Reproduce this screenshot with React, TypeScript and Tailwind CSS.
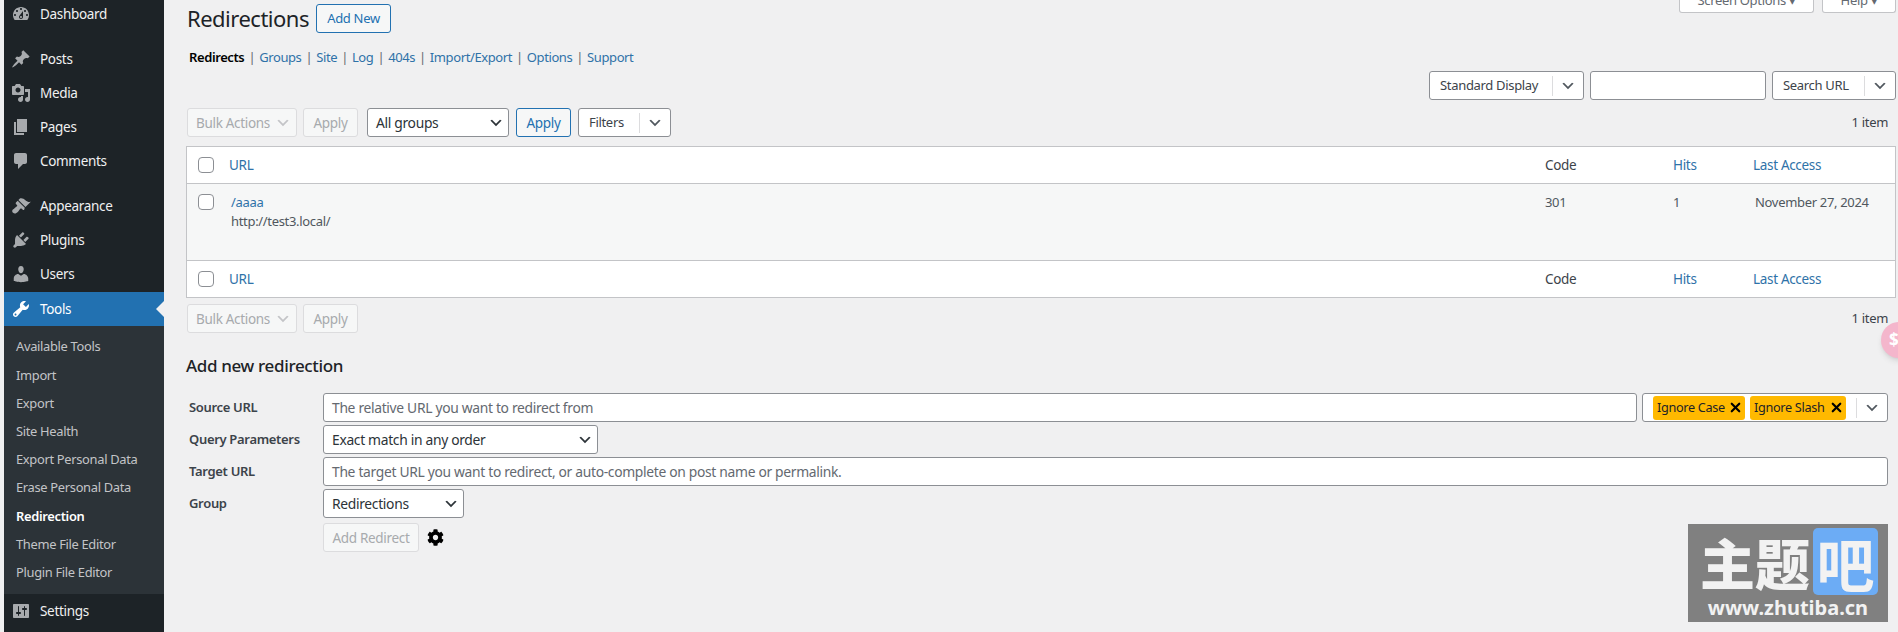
import { X } from 'lucide-react'
import { FaCog } from 'react-icons/fa'
import type { ReactNode } from 'react'

const icons: Record<string, string> = {
  dashboard:
    'M3.76 16h12.48c1.1-1.37 1.76-3.11 1.76-5 0-4.42-3.58-8-8-8s-8 3.58-8 8c0 1.89.66 3.63 1.76 5zM10 4c.55 0 1 .45 1 1s-.45 1-1 1-1-.45-1-1 .45-1 1-1zM6 6c.55 0 1 .45 1 1s-.45 1-1 1-1-.45-1-1 .45-1 1-1zm8 0c.55 0 1 .45 1 1s-.45 1-1 1-1-.45-1-1 .45-1 1-1zm-5.37 5.55L12 7v6c0 1.1-.9 2-2 2s-2-.9-2-2c0-.57.24-1.08.63-1.45zM4 10c.55 0 1 .45 1 1s-.45 1-1 1-1-.45-1-1 .45-1 1-1zm12 0c.55 0 1 .45 1 1s-.45 1-1 1-1-.45-1-1 .45-1 1-1zm-5 3c0-.55-.45-1-1-1s-1 .45-1 1 .45 1 1 1 1-.45 1-1z',
  posts:
    'M10.44 3.02l1.82-1.82 6.36 6.35-1.83 1.82c-1.05-.68-2.48-.57-3.41.36l-.75.75c-.92.93-1.04 2.35-.35 3.41l-1.83 1.82-2.41-2.41-2.8 2.79c-.42.42-3.38 2.71-3.8 2.29s1.86-3.39 2.28-3.81l2.79-2.79L4.1 9.36l1.83-1.82c1.05.69 2.48.57 3.4-.36l.75-.75c.93-.92 1.05-2.35.36-3.41z',
  media:
    'M13 11V4c0-.55-.45-1-1-1h-1.67L9 1H5L3.67 3H2c-.55 0-1 .45-1 1v7c0 .55.45 1 1 1h10c.55 0 1-.45 1-1zM7 4.5c1.38 0 2.5 1.12 2.5 2.5S8.38 9.5 7 9.5 4.5 8.38 4.5 7 5.62 4.5 7 4.5zM14 6h5v10.5c0 1.38-1.12 2.5-2.5 2.5S14 17.88 14 16.5s1.12-2.5 2.5-2.5c.17 0 .34.02.5.05V9h-3V6zm-4 8.05V13h2v3.5c0 1.38-1.12 2.5-2.5 2.5S7 17.88 7 16.5 8.12 14 9.5 14c.17 0 .34.02.5.05z',
  pages: 'M6 15V2h10v13H6zm-1 1h8v2H3V5h2v11z',
  comments: 'M5 2h9c1.1 0 2 .9 2 2v7c0 1.1-.9 2-2 2h-2l-5 5v-5H5c-1.1 0-2-.9-2-2V4c0-1.1.9-2 2-2z',
  appearance:
    'M14.48 11.06L7.41 3.99l1.5-1.5c.5-.56 2.3-.47 3.51.32 1.21.8 1.43 1.28 2.91 2.1 1.18.64 2.45 1.26 4.45.85zm-.71.71L6.7 4.7 4.93 6.47c-.39.39-.39 1.02 0 1.41l1.06 1.06c.39.39.39 1.03 0 1.42-.6.6-1.43 1.11-2.21 1.69-.35.26-.7.53-1.01.84C1.43 13.23.5 15.1 2.04 16.64s3.41.6 4.74-.74c.31-.31.58-.66.84-1.01.58-.78 1.09-1.61 1.69-2.21.39-.39 1.03-.39 1.42 0l1.06 1.06c.39.39 1.02.39 1.41 0z',
  plugins:
    'M13.11 4.36L9.87 7.6 8 5.73l3.24-3.24c.35-.34 1.05-.2 1.56.32.52.51.66 1.21.31 1.55zm-8 1.77l.91-1.12 9.01 9.01-1.19.84c-.71.71-2.63 1.16-3.82 1.16H6.14L4.9 17.26c-.59.59-1.54.59-2.12 0-.59-.58-.59-1.53 0-2.12l1.24-1.24v-3.88c0-1.13.4-3.19 1.09-3.89zm7.26 3.97l3.24-3.24c.34-.35 1.04-.21 1.55.31.52.51.66 1.21.31 1.55l-3.24 3.25z',
  users:
    'M10 9.25c-2.27 0-2.73-3.44-2.73-3.44C7 4.02 7.82 2 9.97 2c2.16 0 2.98 2.02 2.71 3.81 0 0-.41 3.44-2.68 3.44zm0 2.57L12.72 10c2.39 0 4.52 2.33 4.52 4.53v2.49s-3.65 1.13-7.24 1.13c-3.65 0-7.24-1.13-7.24-1.13v-2.49c0-2.25 1.94-4.48 4.47-4.48z',
  tools:
    'M16.68 9.77c-1.34 1.34-3.3 1.67-4.95.99l-5.41 6.52c-.99.99-2.59.99-3.58 0s-.99-2.59 0-3.57l6.52-5.42c-.68-1.65-.35-3.61.99-4.95 1.28-1.28 3.12-1.62 4.72-1.06l-2.89 2.89 2.82 2.82 2.86-2.87c.53 1.58.18 3.39-1.08 4.65zM3.81 16.21c.4.39 1.04.39 1.43 0 .4-.4.4-1.04 0-1.43-.39-.4-1.03-.4-1.43 0-.39.39-.39 1.03 0 1.43z',
  settings:
    'M18 16V4c0-.55-.45-1-1-1H3c-.55 0-1 .45-1 1v12c0 .55.45 1 1 1h14c.55 0 1-.45 1-1zM8 11h1c.55 0 1 .45 1 1s-.45 1-1 1H8v1.5c0 .28-.22.5-.5.5s-.5-.22-.5-.5V13H6c-.55 0-1-.45-1-1s.45-1 1-1h1V5.5c0-.28.22-.5.5-.5s.5.22.5.5V11zm5-2h-1c-.55 0-1-.45-1-1s.45-1 1-1h1V5.5c0-.28.22-.5.5-.5s.5.22.5.5V7h1c.55 0 1 .45 1 1s-.45 1-1 1h-1v5.5c0 .28-.22.5-.5.5s-.5-.22-.5-.5V9z',
}

function MenuItem({ icon, label, active }: { icon: string; label: string; active?: boolean }) {
  return (
    <div className={`relative flex h-[34px] items-center pl-[7px] text-[13.5px] text-[#f0f0f1] ${active ? 'bg-[#2271b1] text-white' : ''}`}>
      <svg viewBox="0 0 20 20" className="h-5 w-5" fill={active ? '#ffffff' : '#a7aaad'}>
        <path d={icons[icon]} />
      </svg>
      <span className="ml-[9px]">{label}</span>
      {active && (
        <span className="absolute right-0 top-[9px] h-0 w-0 border-y-[8px] border-r-[8px] border-y-transparent border-r-[#f0f0f1]" />
      )}
    </div>
  )
}

function Sidebar() {
  const sub = ['Available Tools', 'Import', 'Export', 'Site Health', 'Export Personal Data', 'Erase Personal Data', 'Redirection', 'Theme File Editor', 'Plugin File Editor']
  return (
    <div className="-mt-[3px] flex h-[640px] w-40 shrink-0 flex-col bg-[#1d2327]">
      <MenuItem icon="dashboard" label="Dashboard" />
      <div className="h-[11px]" />
      <MenuItem icon="posts" label="Posts" />
      <MenuItem icon="media" label="Media" />
      <MenuItem icon="pages" label="Pages" />
      <MenuItem icon="comments" label="Comments" />
      <div className="h-[11px]" />
      <MenuItem icon="appearance" label="Appearance" />
      <MenuItem icon="plugins" label="Plugins" />
      <MenuItem icon="users" label="Users" />
      <div className="h-px" />
      <MenuItem icon="tools" label="Tools" active />
      <div className="bg-[#2c3338] pb-[7px] pt-[7px]">
        {sub.map(s => (
          <div key={s} className={`flex h-[28.2px] items-center pl-3 text-[12.9px] ${s === 'Redirection' ? 'font-semibold text-white' : 'text-[#c3c4c7]'}`}>
            {s}
          </div>
        ))}
      </div>
      <MenuItem icon="settings" label="Settings" />
    </div>
  )
}

function Chevron({ className = 'text-[#50575e]' }: { className?: string }) {
  return (
    <svg viewBox="0 0 20 20" className={`h-4 w-4 ${className}`} fill="currentColor">
      <path d="M5 6l5 5 5-5 2 1-7 7-7-7 2-1z" />
    </svg>
  )
}

function SelectBox({ label, width }: { label: string; width: string }) {
  return (
    <div className={`flex h-[29px] items-center justify-between rounded-[3px] border border-[#8c8f94] bg-white pl-[8px] pr-[4px] text-[13.85px] text-[#2c3338] ${width}`}>
      <span className="pt-px">{label}</span>
      <Chevron className="text-[#2c3338]" />
    </div>
  )
}

function SplitSelect({ label, width, textWidth }: { label: string; width: string; textWidth: string }) {
  return (
    <div className={`flex h-[29px] items-center rounded-[3px] border border-[#8c8f94] bg-white text-[#3c434a] ${width}`}>
      <span className={`pl-[10px] pt-px ${textWidth}`}>{label}</span>
      <span className="h-[20px] w-px bg-[#dcdcde]" />
      <span className="flex flex-1 justify-center">
        <Chevron />
      </span>
    </div>
  )
}

function DisabledBtn({ children, className }: { children: ReactNode; className: string }) {
  return (
    <div className={`flex h-[29px] items-center rounded-[3px] border border-[#dcdcde] bg-[#f6f7f7] pt-px text-[#a7aaad] ${className}`}>
      {children}
    </div>
  )
}

function BulkRow() {
  return (
    <div className="flex items-center gap-[6px] pl-px text-[13.5px]">
      <DisabledBtn className="w-[110px] justify-between pl-2 pr-[5px]">
        <span>Bulk Actions</span>
        <Chevron className="text-[#c3c4c7]" />
      </DisabledBtn>
      <DisabledBtn className="w-[55px] justify-center">Apply</DisabledBtn>
    </div>
  )
}

function Checkbox() {
  return <span className="block h-4 w-4 rounded-[4px] border border-[#8c8f94] bg-white" />
}

function HeaderRow({ border }: { border: string }) {
  return (
    <div className={`grid h-[37px] grid-cols-[42px_1316px_128px_80px_1fr] items-center bg-white text-[13.5px] ${border}`}>
      <span className="pl-[11px]">
        <Checkbox />
      </span>
      <span className="pt-px text-[#2f72a8]">URL</span>
      <span className="pt-px text-[#3c434a]">Code</span>
      <span className="pt-px text-[#2f72a8]">Hits</span>
      <span className="pt-px text-[#2f72a8]">Last Access</span>
    </div>
  )
}

function Tag({ label, width }: { label: string; width: string }) {
  return (
    <span className={`flex h-[24px] items-center justify-between rounded-[3px] bg-[#ffb900] pl-1 pr-[2px] text-[12.7px] text-[#1d2327] ${width}`}>
      {label}
      <X size={15} strokeWidth={3.5} className="text-black" />
    </span>
  )
}

function Field({ label, children }: { label: string; children: ReactNode }) {
  return (
    <div className="grid grid-cols-[137px_1fr] items-center">
      <span className="pl-[3px] pt-px font-semibold text-[#3c434a]">{label}</span>
      {children}
    </div>
  )
}

function TextField({ text, className = '' }: { text?: string; className?: string }) {
  return (
    <div className={`flex h-[29px] items-center rounded-[3px] border border-[#8c8f94] bg-white pl-[8px] pt-px text-[13.85px] text-[#646970] ${className}`}>
      {text}
    </div>
  )
}

export default function App() {
  return (
    <div className="relative flex h-[632px] overflow-hidden bg-[#f0f0f1] pl-1 font-['Noto_Sans',sans-serif] text-[13px] tracking-[-0.32px] text-[#3c434a]">
      <Sidebar />
      <main className="flex-1 pl-[22px] pr-[2px] pt-1">
        {/* 제목 */}
        <div className="flex h-[29px] justify-between">
          <div className="flex items-center pl-px">
            <h1 className="text-[22px] font-normal leading-[29px] tracking-[-0.5px] text-[#1d2327]">Redirections</h1>
            <span className="ml-[7px] flex h-[29px] w-[75px] items-center justify-center rounded-[3px] border border-[#2271b1] bg-[#f6f7f7] text-[#2271b1]">Add New</span>
          </div>
          <div className="-mt-2 flex h-[17px] gap-[8px] overflow-hidden">
            <span className="flex h-full w-[135px] justify-center rounded-b-[3px] border border-t-0 border-[#c3c4c7] bg-white text-[#646970]">
              <span className="-mt-[5px]">Screen Options ▾</span>
            </span>
            <span className="flex h-full w-[74px] justify-center rounded-b-[3px] border border-t-0 border-[#c3c4c7] bg-white text-[#646970]">
              <span className="-mt-[5px]">Help ▾</span>
            </span>
          </div>
        </div>

        <nav className="mt-[15px] flex h-[20px] items-center gap-[4px] pl-[3px] tracking-[-0.4px]">
          <span className="font-semibold text-black">Redirects</span>
          {['Groups', 'Site', 'Log', '404s', 'Import/Export', 'Options', 'Support'].map(n => (
            <span key={n} className="flex gap-[4px]">
              <span className="text-[#646970]">|</span>
              <span className="text-[#2f72a8]">{n}</span>
            </span>
          ))}
        </nav>

        {/* 검색 */}
        <div className="mt-[3px] flex justify-end gap-[6px]">
          <SplitSelect label="Standard Display" width="w-[155px]" textWidth="w-[122px]" />
          <div className="h-[29px] w-[176px] rounded-[3px] border border-[#8c8f94] bg-white" />
          <SplitSelect label="Search URL" width="w-[124px]" textWidth="w-[91px]" />
        </div>

        <div className="mt-2 flex items-center">
          <BulkRow />
          <div className="ml-[9px] flex items-center gap-[7px]">
            <SelectBox label="All groups" width="w-[142px]" />
            <span className="flex h-[29px] w-[55px] items-center justify-center rounded-[3px] border border-[#2271b1] bg-[#f6f7f7] pt-px text-[13.5px] text-[#2271b1]">Apply</span>
            <SplitSelect label="Filters" width="w-[93px]" textWidth="w-[60px]" />
          </div>
          <span className="ml-auto pr-[8px] pt-px">1 item</span>
        </div>

        {/* 목록 */}
        <div className="mt-[9px] border border-[#c3c4c7]">
          <HeaderRow border="border-b border-[#c3c4c7]" />
          <div className="grid h-[76px] grid-cols-[42px_1316px_128px_80px_1fr] bg-[#f6f7f7] pt-[9px]">
            <span className="pl-[11px] pt-px">
              <Checkbox />
            </span>
            <div className="pl-[2px] leading-[19px]">
              <div className="text-[#2f72a8]">/aaaa</div>
              <div className="text-[#50575e]">http://test3.local/</div>
            </div>
            <span className="leading-[19px] text-[#50575e]">301</span>
            <span className="leading-[19px] text-[#50575e]">1</span>
            <span className="pl-[2px] leading-[19px] text-[#50575e]">November 27, 2024</span>
          </div>
          <HeaderRow border="border-t border-[#c3c4c7]" />
        </div>

        <div className="mt-[6px] flex items-center">
          <BulkRow />
          <span className="ml-auto pr-[8px] pt-px">1 item</span>
        </div>

        {/* 추가 폼 */}
        <h2 className="mt-[22px] h-[22px] text-[17px] font-medium leading-[22px] tracking-[-0.35px] text-[#1d2327]">Add new redirection</h2>
        <div className="mt-[16px] flex flex-col gap-[3px] pr-[8px]">
          <Field label="Source URL">
            <div className="flex gap-[5px]">
              <TextField text="The relative URL you want to redirect from" className="flex-1" />
              <div className="flex h-[29px] w-[246px] items-center rounded-[3px] border border-[#8c8f94] bg-white pl-[10px]">
                <Tag label="Ignore Case" width="w-[92px]" />
                <span className="w-[5px]" />
                <Tag label="Ignore Slash" width="w-[96px]" />
                <span className="ml-[10px] h-[20px] w-px bg-[#dcdcde]" />
                <span className="flex flex-1 justify-center">
                  <Chevron />
                </span>
              </div>
            </div>
          </Field>
          <Field label="Query Parameters">
            <SelectBox label="Exact match in any order" width="w-[275px]" />
          </Field>
          <Field label="Target URL">
            <TextField text="The target URL you want to redirect, or auto-complete on post name or permalink." />
          </Field>
          <Field label="Group">
            <SelectBox label="Redirections" width="w-[141px]" />
          </Field>
        </div>
        <div className="ml-[137px] mt-[5px] flex items-center gap-[8px] text-[13.5px]">
          <DisabledBtn className="w-[96px] justify-center">Add Redirect</DisabledBtn>
          <FaCog className="h-[17px] w-[17px] text-black" />
        </div>
      </main>

      {/* 떠 있는 버튼 */}
      <div className="absolute left-[1881px] top-[322px] flex h-[36px] w-[36px] items-center rounded-full bg-[#f4b6cc] pl-[8px] text-[17px] font-bold text-white shadow-md">$</div>

      {/* 워터마크 */}
      <div className="absolute left-[1688px] top-[524px] flex h-[98px] w-[200px] flex-col bg-[#808080] font-['Noto_Sans_CJK_SC',sans-serif] tracking-normal text-[#f2f2f2]">
        <div className="flex h-[72px] items-center pl-[12px] pt-[3px]">
          <span className="w-[113px] text-[55px] font-black leading-none">主题</span>
          <span className="flex h-[67px] w-[65px] items-center justify-center rounded-[5px] bg-[#6cacf5] text-[58px] font-bold leading-none">吧</span>
        </div>
        <div className="text-center font-['Noto_Sans',sans-serif] text-[20px] font-bold leading-[24px]">www.zhutiba.cn</div>
      </div>
    </div>
  )
}
